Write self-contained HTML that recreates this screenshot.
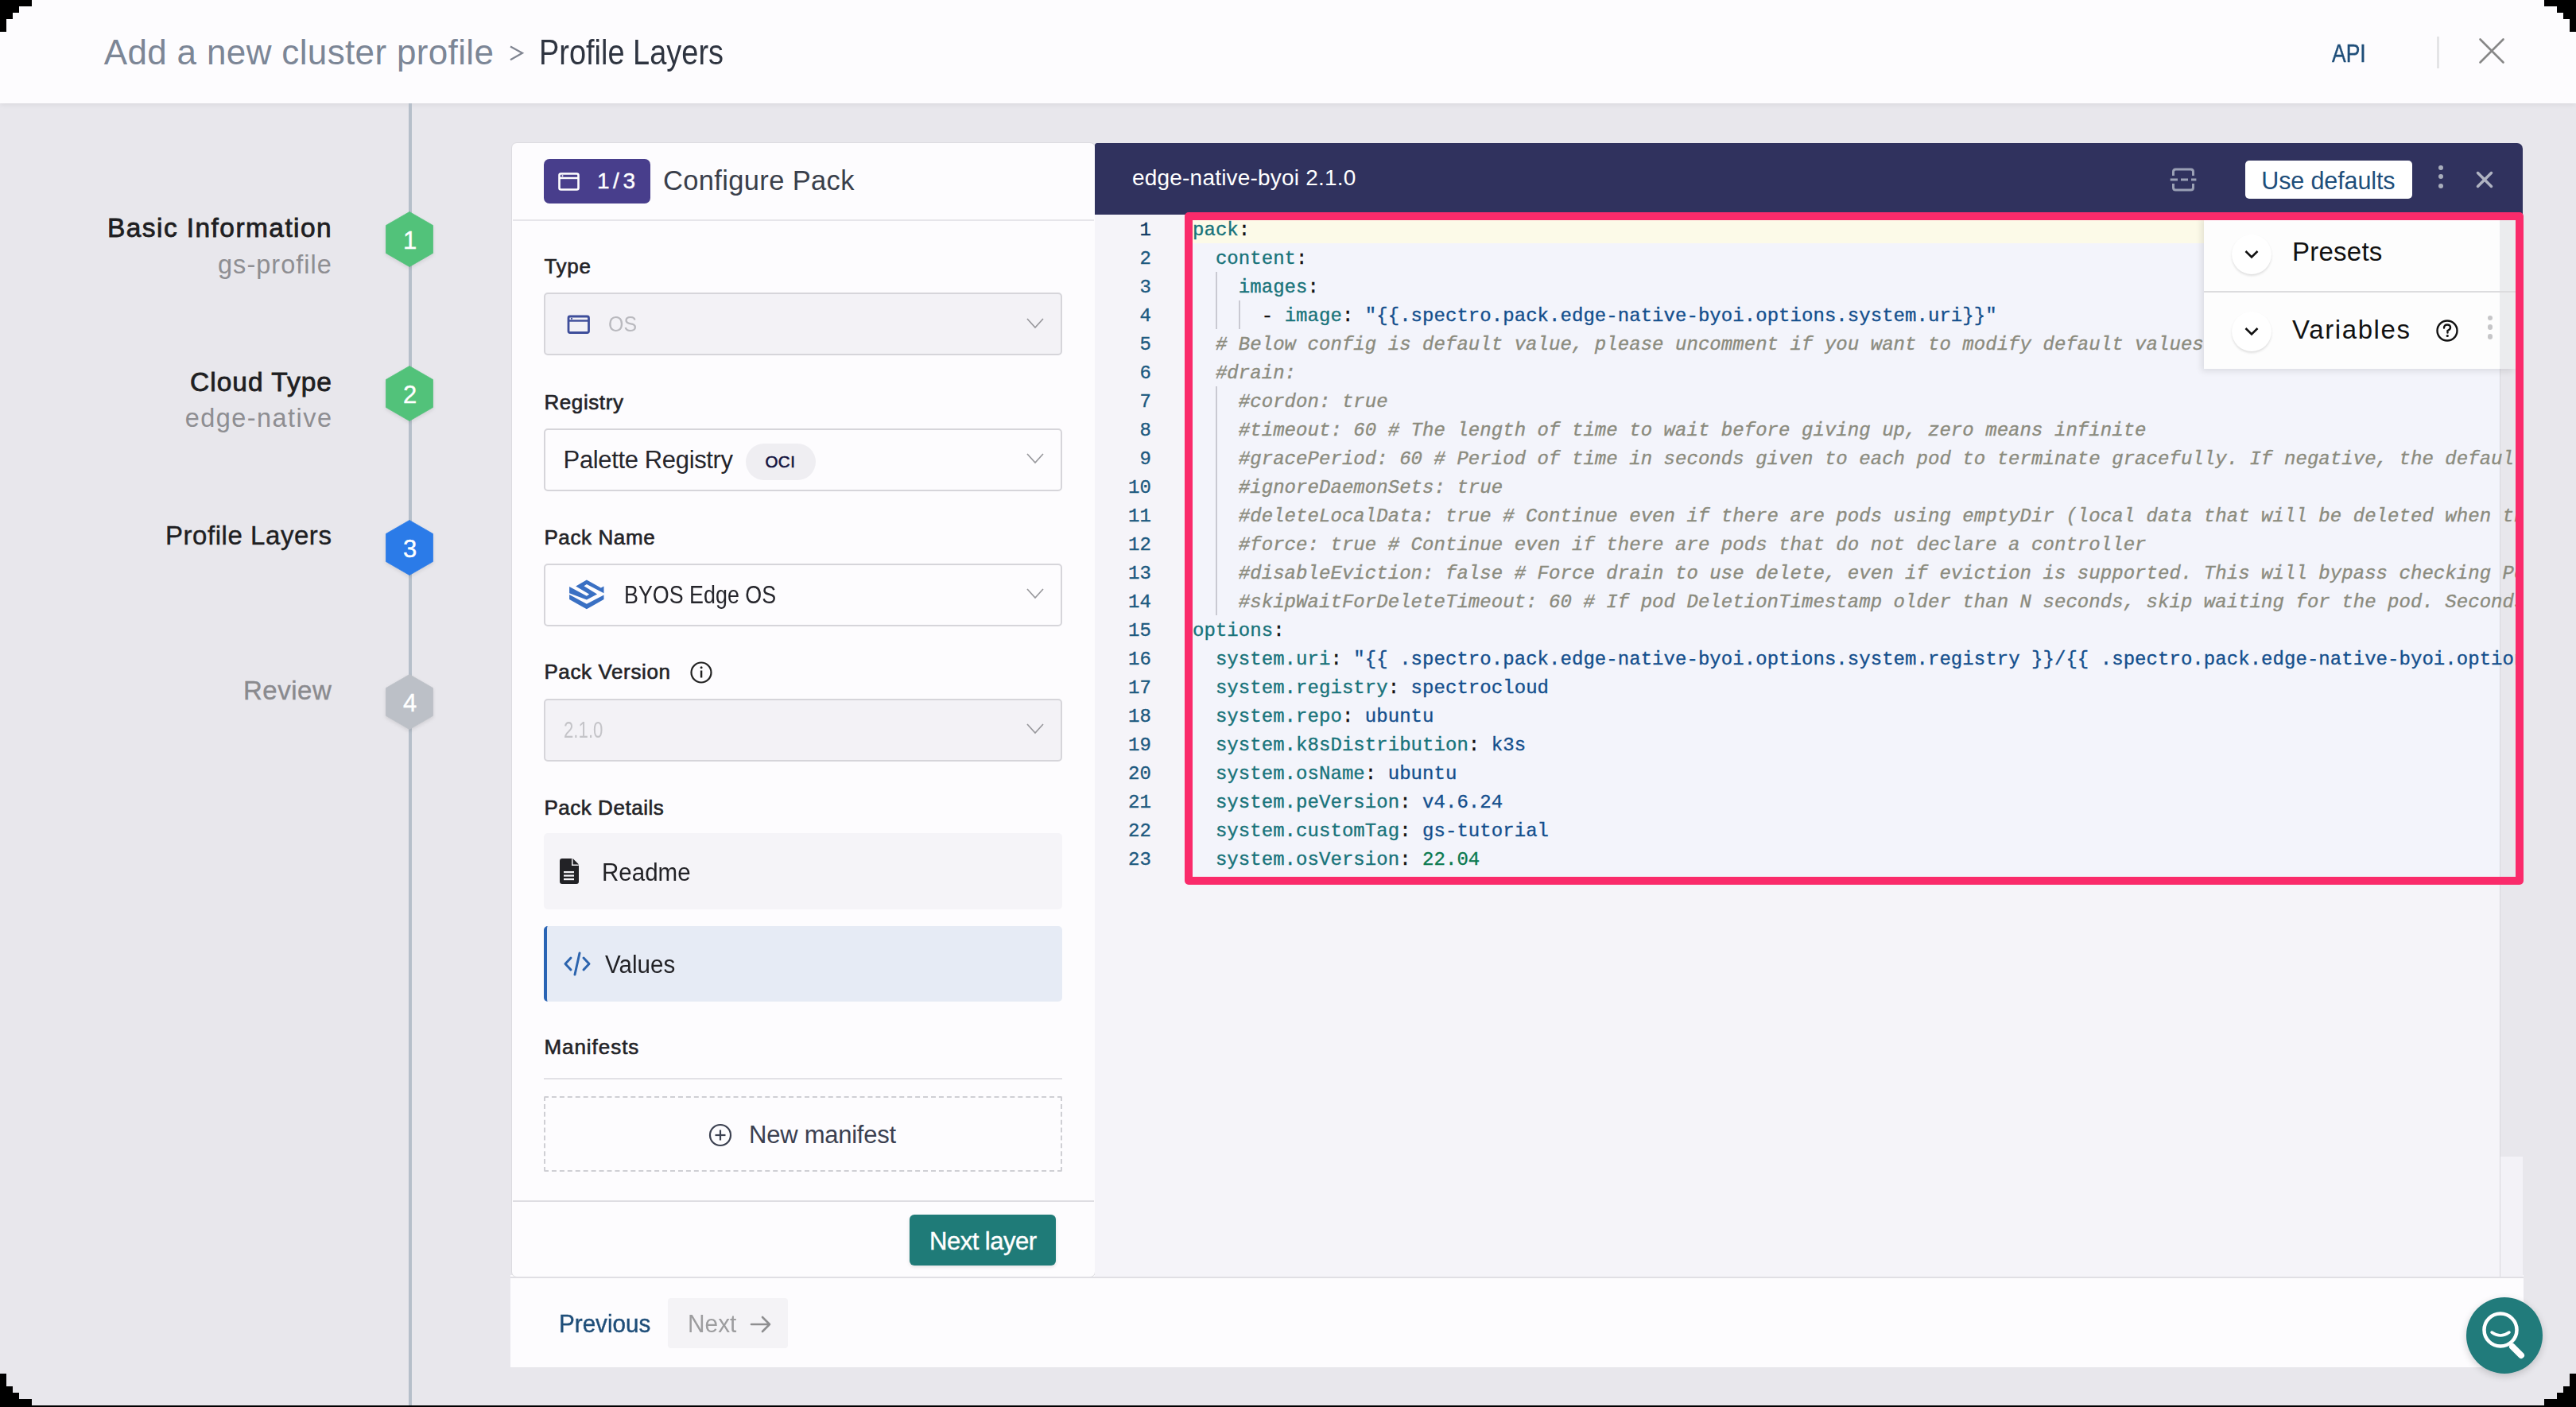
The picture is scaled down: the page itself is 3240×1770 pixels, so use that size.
<!DOCTYPE html><html><head><meta charset="utf-8"><title>Profile Layers</title><style>
*{margin:0;padding:0;box-sizing:border-box}
html,body{width:3240px;height:1770px;overflow:hidden;background:#e8e7ec;font-family:"Liberation Sans", sans-serif}
.a{position:absolute}
.t{position:absolute;white-space:pre;line-height:1}
.code{position:absolute;font-family:"Liberation Mono", monospace;white-space:pre;line-height:36px;-webkit-text-stroke:0.35px currentColor}
</style></head><body>
<div class="a" style="left:0;top:0;width:3240px;height:130px;background:#fdfcfe;box-shadow:0 2px 6px rgba(0,0,0,0.06)"></div>
<div class="t" style="left:130.7px;top:43.8px;font-size:44.0px;letter-spacing:0.35px;font-weight:normal;color:#7c8696;">Add a new cluster profile</div>
<svg class="a" style="left:638px;top:55px" width="24" height="24" viewBox="0 0 24 24"><polyline points="4,3.5 19,11.8 4,20.2" fill="none" stroke="#7f8490" stroke-width="2.2"/></svg>
<div class="t" style="left:678.0px;top:43.8px;font-size:44.0px;letter-spacing:0.00px;font-weight:normal;color:#2e3440;transform:scaleX(0.8625);transform-origin:0.0px 0;">Profile Layers</div>
<div class="t" style="left:2933.0px;top:52.2px;font-size:30.5px;letter-spacing:0.00px;font-weight:normal;color:#1f4e79;-webkit-text-stroke:0.4px #1f4e79;transform:scaleX(0.8679);transform-origin:0.0px 0;">API</div>
<div class="a" style="left:3065px;top:46px;width:3px;height:40px;background:#e4e4e6"></div>
<svg class="a" style="left:3116px;top:46px" width="36" height="36" viewBox="0 0 36 36"><path d="M3.5 3.5L32.5 32.5M32.5 3.5L3.5 32.5" stroke="#878787" stroke-width="2.6" stroke-linecap="round"/></svg>
<div class="a" style="left:514px;top:130px;width:4px;height:1640px;background:#b6bfca"></div>
<svg class="a" style="left:483px;top:264px;filter:drop-shadow(0 2px 2px rgba(0,0,0,0.10))" width="64" height="74" viewBox="-2 -2 64 74"><polygon points="30,0.5 59.5,17.5 59.5,52.5 30,69.5 0.5,52.5 0.5,17.5" fill="#52c27a" stroke="#52c27a" stroke-width="0.8" stroke-linejoin="round"/></svg>
<div class="t" style="left:507.0px;top:286.8px;font-size:31.0px;letter-spacing:0.00px;font-weight:normal;color:#fff;-webkit-text-stroke:0.4px #fff;text-align:center;">1</div>
<svg class="a" style="left:483px;top:458px;filter:drop-shadow(0 2px 2px rgba(0,0,0,0.10))" width="64" height="74" viewBox="-2 -2 64 74"><polygon points="30,0.5 59.5,17.5 59.5,52.5 30,69.5 0.5,52.5 0.5,17.5" fill="#52c27a" stroke="#52c27a" stroke-width="0.8" stroke-linejoin="round"/></svg>
<div class="t" style="left:507.0px;top:480.8px;font-size:31.0px;letter-spacing:0.00px;font-weight:normal;color:#fff;-webkit-text-stroke:0.4px #fff;text-align:center;">2</div>
<svg class="a" style="left:483px;top:652px;filter:drop-shadow(0 2px 2px rgba(0,0,0,0.10))" width="64" height="74" viewBox="-2 -2 64 74"><polygon points="30,0.5 59.5,17.5 59.5,52.5 30,69.5 0.5,52.5 0.5,17.5" fill="#2b7be8" stroke="#2b7be8" stroke-width="0.8" stroke-linejoin="round"/></svg>
<div class="t" style="left:507.0px;top:674.8px;font-size:31.0px;letter-spacing:0.00px;font-weight:normal;color:#fff;-webkit-text-stroke:0.4px #fff;text-align:center;">3</div>
<svg class="a" style="left:483px;top:846px;filter:drop-shadow(0 2px 2px rgba(0,0,0,0.10))" width="64" height="74" viewBox="-2 -2 64 74"><polygon points="30,0.5 59.5,17.5 59.5,52.5 30,69.5 0.5,52.5 0.5,17.5" fill="#bcc0c7" stroke="#bcc0c7" stroke-width="0.8" stroke-linejoin="round"/></svg>
<div class="t" style="left:507.0px;top:868.8px;font-size:31.0px;letter-spacing:0.00px;font-weight:normal;color:#fff;-webkit-text-stroke:0.4px #fff;text-align:center;">4</div>
<div class="t" style="left:135.0px;top:270.3px;font-size:33.5px;letter-spacing:1.43px;font-weight:normal;color:#1e1e22;-webkit-text-stroke:0.8px #1e1e22;">Basic Information</div>
<div class="t" style="left:274.0px;top:316.9px;font-size:32.5px;letter-spacing:1.03px;font-weight:normal;color:#8e8e92;">gs-profile</div>
<div class="t" style="left:239.0px;top:463.6px;font-size:33.5px;letter-spacing:1.01px;font-weight:normal;color:#1e1e22;-webkit-text-stroke:0.8px #1e1e22;">Cloud Type</div>
<div class="t" style="left:232.7px;top:510.0px;font-size:32.5px;letter-spacing:1.45px;font-weight:normal;color:#8e8e92;">edge-native</div>
<div class="t" style="left:208.0px;top:657.4px;font-size:33.0px;letter-spacing:0.55px;font-weight:normal;color:#1e1e22;-webkit-text-stroke:0.4px #1e1e22;">Profile Layers</div>
<div class="t" style="left:306.0px;top:852.1px;font-size:33.0px;letter-spacing:0.52px;font-weight:normal;color:#8a8a8e;-webkit-text-stroke:0.4px #8a8a8e;">Review</div>
<div class="a" style="left:642px;top:1604px;width:2532px;height:116px;background:#fdfcfe"></div>
<div class="a" style="left:643px;top:179px;width:735px;height:1428px;background:#fdfcfe;border:1.5px solid #dcdbe0;border-radius:7px"></div>
<div class="a" style="left:645px;top:276px;width:731px;height:2px;background:#e6e5ea"></div>
<div class="a" style="left:684px;top:200px;width:134px;height:56px;background:#483e8c;border-radius:7px"></div>
<svg class="a" style="left:702px;top:217px" width="28" height="24" viewBox="0 0 28 24"><rect x="1.5" y="1.5" width="24" height="20" rx="2" fill="none" stroke="#fff" stroke-width="2.6"/><line x1="1.5" y1="7" x2="25.5" y2="7" stroke="#fff" stroke-width="2.4"/><circle cx="5.5" cy="4.3" r="1" fill="#fff"/></svg>
<div class="t" style="left:751.0px;top:214.3px;font-size:28.0px;letter-spacing:4.55px;font-weight:normal;color:#ffffff;-webkit-text-stroke:0.4px #ffffff;">1/3</div>
<div class="t" style="left:834.0px;top:209.6px;font-size:34.5px;letter-spacing:0.35px;font-weight:normal;color:#3a3f4b;">Configure Pack</div>
<div class="t" style="left:684.4px;top:322.0px;font-size:26.0px;letter-spacing:0.73px;font-weight:normal;color:#232327;-webkit-text-stroke:0.6px #232327;">Type</div>
<div class="a" style="left:684px;top:368px;width:652px;height:79px;background:#f3f2f6;border:2px solid #d6d5da;border-radius:5px"></div>
<svg class="a" style="left:1290px;top:398.5px" width="24" height="16" viewBox="0 0 24 16"><polyline points="2,2 12,13 22,2" fill="none" stroke="#98989c" stroke-width="1.7"/></svg>
<svg class="a" style="left:713px;top:396px" width="30" height="25" viewBox="0 0 30 25"><rect x="2" y="2" width="25.5" height="20.5" rx="2" fill="none" stroke="#3e4e9a" stroke-width="2.8"/><line x1="2" y1="7.5" x2="27.5" y2="7.5" stroke="#3e4e9a" stroke-width="2.4"/><circle cx="6" cy="4.8" r="1.1" fill="#3e4e9a"/></svg>
<div class="t" style="left:765.0px;top:394.6px;font-size:27.0px;letter-spacing:0.00px;font-weight:normal;color:#b9b9be;transform:scaleX(0.9231);transform-origin:0.0px 0;">OS</div>
<div class="t" style="left:684.4px;top:492.8px;font-size:26.0px;letter-spacing:0.60px;font-weight:normal;color:#232327;-webkit-text-stroke:0.6px #232327;">Registry</div>
<div class="a" style="left:684px;top:538.8px;width:652px;height:79px;background:#fdfcfe;border:2px solid #d6d5da;border-radius:5px"></div>
<svg class="a" style="left:1290px;top:569.3px" width="24" height="16" viewBox="0 0 24 16"><polyline points="2,2 12,13 22,2" fill="none" stroke="#98989c" stroke-width="1.7"/></svg>
<div class="t" style="left:708.6px;top:562.5px;font-size:31.0px;letter-spacing:-0.36px;font-weight:normal;color:#25252b;">Palette Registry</div>
<div class="a" style="left:938px;top:558px;width:88px;height:46px;background:#efeef2;border-radius:23px"></div>
<div class="t" style="left:962.4px;top:570.6px;font-size:20.5px;letter-spacing:0.50px;font-weight:normal;color:#14143f;-webkit-text-stroke:0.6px #14143f;">OCI</div>
<div class="t" style="left:684.4px;top:662.6px;font-size:26.0px;letter-spacing:0.61px;font-weight:normal;color:#232327;-webkit-text-stroke:0.6px #232327;">Pack Name</div>
<div class="a" style="left:684px;top:708.6px;width:652px;height:79px;background:#fdfcfe;border:2px solid #d6d5da;border-radius:5px"></div>
<svg class="a" style="left:1290px;top:739.1px" width="24" height="16" viewBox="0 0 24 16"><polyline points="2,2 12,13 22,2" fill="none" stroke="#98989c" stroke-width="1.7"/></svg>
<svg class="a" style="left:712px;top:726px" width="52" height="44" viewBox="0 0 52 44"><polygon points="25.9,3.4 43.8,13.4 47.5,11.6 47.5,20.3 25.9,9.1 22.5,11.2 39.1,21.6 25.9,28.4 4.1,20.3 4.1,11.9 25.9,23.8 29.1,21.6 12.2,11.6" fill="#3a70c3"/><polygon points="4.1,21.9 25.9,33.8 47.5,22.5 47.5,28.1 25.9,40.3 4.1,28.1" fill="#3a70c3"/></svg>
<div class="t" style="left:784.9px;top:732.7px;font-size:30.5px;letter-spacing:0.00px;font-weight:normal;color:#25252b;transform:scaleX(0.8806);transform-origin:0.0px 0;">BYOS Edge OS</div>
<div class="t" style="left:684.4px;top:832.4px;font-size:26.0px;letter-spacing:0.62px;font-weight:normal;color:#232327;-webkit-text-stroke:0.6px #232327;">Pack Version</div>
<svg class="a" style="left:867px;top:831px" width="30" height="30" viewBox="0 0 30 30"><circle cx="15" cy="15" r="12.5" fill="none" stroke="#222" stroke-width="2.2"/><rect x="13.9" y="12.5" width="2.4" height="9" fill="#222"/><circle cx="15.1" cy="8.8" r="1.5" fill="#222"/></svg>
<div class="a" style="left:684px;top:878.6px;width:652px;height:79px;background:#f3f2f6;border:2px solid #d6d5da;border-radius:5px"></div>
<svg class="a" style="left:1290px;top:909.1px" width="24" height="16" viewBox="0 0 24 16"><polyline points="2,2 12,13 22,2" fill="none" stroke="#98989c" stroke-width="1.7"/></svg>
<div class="t" style="left:708.6px;top:903.5px;font-size:29.0px;letter-spacing:0.00px;font-weight:normal;color:#c4c4c8;transform:scaleX(0.7659);transform-origin:0.0px 0;">2.1.0</div>
<div class="t" style="left:684.4px;top:1002.8px;font-size:26.0px;letter-spacing:0.54px;font-weight:normal;color:#232327;-webkit-text-stroke:0.6px #232327;">Pack Details</div>
<div class="a" style="left:684px;top:1048px;width:652px;height:96px;background:#f5f4f8;border-radius:5px"></div>
<svg class="a" style="left:703px;top:1079px" width="26" height="34" viewBox="0 0 26 34"><path d="M3 1 H16 L25 10 V30 Q25 33 22 33 H4 Q1 33 1 30 V4 Q1 1 4 1 Z" fill="#222226"/><path d="M16 1 V10 H25" fill="#f5f4f8"/><path d="M17.5 1 V8.5 H25" fill="#222226"/><rect x="6" y="17" width="13" height="2.2" fill="#f5f4f8"/><rect x="6" y="21.5" width="13" height="2.2" fill="#f5f4f8"/><rect x="6" y="26" width="13" height="2.2" fill="#f5f4f8"/></svg>
<div class="t" style="left:757.0px;top:1082.4px;font-size:31.0px;letter-spacing:0.00px;font-weight:normal;color:#222226;transform:scaleX(0.9522);transform-origin:0.0px 0;">Readme</div>
<div class="a" style="left:684px;top:1164.5px;width:652px;height:95px;background:#e6ebf5;border-left:4px solid #2a64b4;border-radius:5px"></div>
<svg class="a" style="left:708px;top:1196px" width="36" height="33" viewBox="0 0 36 33"><polyline points="10,9 3,16.5 10,24" fill="none" stroke="#2c64ae" stroke-width="3" stroke-linecap="round" stroke-linejoin="round"/><polyline points="26,9 33,16.5 26,24" fill="none" stroke="#2c64ae" stroke-width="3" stroke-linecap="round" stroke-linejoin="round"/><line x1="21" y1="3" x2="15" y2="30" stroke="#2c64ae" stroke-width="3" stroke-linecap="round"/></svg>
<div class="t" style="left:760.6px;top:1198.1px;font-size:31.0px;letter-spacing:0.00px;font-weight:normal;color:#222226;transform:scaleX(0.9535);transform-origin:0.0px 0;">Values</div>
<div class="t" style="left:684.4px;top:1304.0px;font-size:26.0px;letter-spacing:0.96px;font-weight:normal;color:#232327;-webkit-text-stroke:0.6px #232327;">Manifests</div>
<div class="a" style="left:684px;top:1356px;width:652px;height:2px;background:#e2e1e6"></div>
<div class="a" style="left:684px;top:1378.5px;width:652px;height:95px;border:2px dashed #cfcfd4;border-radius:2px"></div>
<svg class="a" style="left:890px;top:1412px" width="32" height="32" viewBox="0 0 32 32"><circle cx="16" cy="16" r="13" fill="none" stroke="#3b4050" stroke-width="2.2"/><line x1="16" y1="9.5" x2="16" y2="22.5" stroke="#3b4050" stroke-width="2.2"/><line x1="9.5" y1="16" x2="22.5" y2="16" stroke="#3b4050" stroke-width="2.2"/></svg>
<div class="t" style="left:942.0px;top:1412.2px;font-size:31.0px;letter-spacing:-0.25px;font-weight:normal;color:#3b4050;">New manifest</div>
<div class="a" style="left:645px;top:1510px;width:731px;height:2px;background:#dedde2"></div>
<div class="a" style="left:1144px;top:1528px;width:184px;height:64px;background:#1f7b78;border-radius:6px;box-shadow:0 2px 4px rgba(0,0,0,0.1)"></div>
<div class="t" style="left:1169.0px;top:1546.3px;font-size:31.0px;letter-spacing:-0.50px;font-weight:normal;color:#ffffff;-webkit-text-stroke:0.4px #ffffff;">Next layer</div>
<div class="a" style="left:642px;top:1606px;width:2532px;height:2px;background:#e0dfe4"></div>
<div class="t" style="left:702.7px;top:1650.4px;font-size:31.0px;letter-spacing:0.00px;font-weight:normal;color:#1f4e79;-webkit-text-stroke:0.4px #1f4e79;transform:scaleX(0.9561);transform-origin:0.0px 0;">Previous</div>
<div class="a" style="left:840px;top:1633px;width:151px;height:63px;background:#f4f3f6;border-radius:4px"></div>
<div class="t" style="left:864.7px;top:1650.4px;font-size:31.0px;letter-spacing:0.00px;font-weight:normal;color:#9d9d9f;transform:scaleX(0.9623);transform-origin:0.0px 0;">Next</div>
<svg class="a" style="left:942px;top:1651px" width="30" height="30" viewBox="0 0 30 30"><path d="M3 15H26M17 6L26 15L17 24" fill="none" stroke="#8e8e90" stroke-width="2.6" stroke-linecap="round" stroke-linejoin="round"/></svg>
<div class="a" style="left:1377px;top:180px;width:1796px;height:1426px;background:#f5f4f9;border-radius:0 7px 7px 0"></div>
<div class="a" style="left:1377px;top:180px;width:1796px;height:90px;background:#30325e;border-radius:3px 7px 0 0"></div>
<div class="t" style="left:1424px;top:210.3px;font-size:28px;color:#fff;letter-spacing:0.2px">edge-native-byoi 2.1.0</div>
<svg class="a" style="left:2727px;top:210px" width="38" height="32" viewBox="0 0 38 32"><path d="M6.5 11V6Q6.5 3 9.5 3H28.5Q31.5 3 31.5 6V11M6.5 21V26Q6.5 29 9.5 29H28.5Q31.5 29 31.5 26V21" fill="none" stroke="#9aa0b5" stroke-width="3"/><path d="M2.7 16H12M16 16H25M29 16H35.4" stroke="#9aa0b5" stroke-width="3"/></svg>
<div class="a" style="left:2824px;top:202px;width:210px;height:48px;background:#fff;border-radius:5px"></div>
<div class="t" style="left:2844.3px;top:212.1px;font-size:30.5px;letter-spacing:-0.12px;font-weight:normal;color:#1e4e7a;">Use defaults</div>
<div class="a" style="left:3066.7px;top:207.5px;width:6.6px;height:6.6px;border-radius:50%;background:#a8adbb"></div>
<div class="a" style="left:3066.7px;top:218.89999999999998px;width:6.6px;height:6.6px;border-radius:50%;background:#a8adbb"></div>
<div class="a" style="left:3066.7px;top:230.6px;width:6.6px;height:6.6px;border-radius:50%;background:#a8adbb"></div>
<svg class="a" style="left:3113px;top:214px" width="24" height="24" viewBox="0 0 24 24"><path d="M3.5 3.5L20.5 20.5M20.5 3.5L3.5 20.5" stroke="#b0b4c2" stroke-width="3.5" stroke-linecap="round"/></svg>
<div class="a" style="left:3144px;top:277px;width:29px;height:1178px;background:#e8e7ec;border-left:1px solid #d8d8dd"></div>
<div class="a" style="left:3144px;top:1455px;width:29px;height:151px;background:#f3f2f7;border-left:1px solid #d8d8dd"></div>
<div class="a" style="left:1500px;top:277px;width:1644px;height:825px;background:#f3f4fb"></div>
<div class="a" style="left:1500px;top:270px;width:1290px;height:36px;background:#fcfae8"></div>
<div class="a" style="left:1529px;top:342px;width:2px;height:72px;background:#c9c9d2"></div>
<div class="a" style="left:1558px;top:378px;width:2px;height:36px;background:#c9c9d2"></div>
<div class="a" style="left:1529px;top:486px;width:2px;height:288px;background:#c9c9d2"></div>
<div class="a" style="left:1500px;top:270px;width:1664px;height:840px;overflow:hidden">
<div class="code" style="left:0;top:2.1px;font-size:24px;letter-spacing:0.05px"><span style="color:#18737a;">pack</span><span style="color:#111;">:</span></div>
<div class="code" style="left:0;top:38.1px;font-size:24px;letter-spacing:0.05px"><span style="color:#111;">  </span><span style="color:#18737a;">content</span><span style="color:#111;">:</span></div>
<div class="code" style="left:0;top:74.1px;font-size:24px;letter-spacing:0.05px"><span style="color:#111;">    </span><span style="color:#18737a;">images</span><span style="color:#111;">:</span></div>
<div class="code" style="left:0;top:110.1px;font-size:24px;letter-spacing:0.05px"><span style="color:#111;">      </span><span style="color:#111;">- </span><span style="color:#18737a;">image</span><span style="color:#111;">: </span><span style="color:#134f8d;">&quot;{{.spectro.pack.edge-native-byoi.options.system.uri}}&quot;</span></div>
<div class="code" style="left:0;top:146.1px;font-size:24px;letter-spacing:0.05px"><span style="color:#111;">  </span><span style="color:#8b8b7e;font-style:italic;"># Below config is default value, please uncomment if you want to modify default values</span></div>
<div class="code" style="left:0;top:182.1px;font-size:24px;letter-spacing:0.05px"><span style="color:#111;">  </span><span style="color:#8b8b7e;font-style:italic;">#drain:</span></div>
<div class="code" style="left:0;top:218.1px;font-size:24px;letter-spacing:0.05px"><span style="color:#111;">    </span><span style="color:#8b8b7e;font-style:italic;">#cordon: true</span></div>
<div class="code" style="left:0;top:254.1px;font-size:24px;letter-spacing:0.05px"><span style="color:#111;">    </span><span style="color:#8b8b7e;font-style:italic;">#timeout: 60 # The length of time to wait before giving up, zero means infinite</span></div>
<div class="code" style="left:0;top:290.1px;font-size:24px;letter-spacing:0.05px"><span style="color:#111;">    </span><span style="color:#8b8b7e;font-style:italic;">#gracePeriod: 60 # Period of time in seconds given to each pod to terminate gracefully. If negative, the default value specified in the pod will be used</span></div>
<div class="code" style="left:0;top:326.1px;font-size:24px;letter-spacing:0.05px"><span style="color:#111;">    </span><span style="color:#8b8b7e;font-style:italic;">#ignoreDaemonSets: true</span></div>
<div class="code" style="left:0;top:362.1px;font-size:24px;letter-spacing:0.05px"><span style="color:#111;">    </span><span style="color:#8b8b7e;font-style:italic;">#deleteLocalData: true # Continue even if there are pods using emptyDir (local data that will be deleted when the node is drained)</span></div>
<div class="code" style="left:0;top:398.1px;font-size:24px;letter-spacing:0.05px"><span style="color:#111;">    </span><span style="color:#8b8b7e;font-style:italic;">#force: true # Continue even if there are pods that do not declare a controller</span></div>
<div class="code" style="left:0;top:434.1px;font-size:24px;letter-spacing:0.05px"><span style="color:#111;">    </span><span style="color:#8b8b7e;font-style:italic;">#disableEviction: false # Force drain to use delete, even if eviction is supported. This will bypass checking PodDisruptionBudgets, use with caution</span></div>
<div class="code" style="left:0;top:470.1px;font-size:24px;letter-spacing:0.05px"><span style="color:#111;">    </span><span style="color:#8b8b7e;font-style:italic;">#skipWaitForDeleteTimeout: 60 # If pod DeletionTimestamp older than N seconds, skip waiting for the pod. Seconds must be greater than 0 to skip.</span></div>
<div class="code" style="left:0;top:506.1px;font-size:24px;letter-spacing:0.05px"><span style="color:#18737a;">options</span><span style="color:#111;">:</span></div>
<div class="code" style="left:0;top:542.1px;font-size:24px;letter-spacing:0.05px"><span style="color:#111;">  </span><span style="color:#18737a;">system.uri</span><span style="color:#111;">: </span><span style="color:#134f8d;">&quot;{{ .spectro.pack.edge-native-byoi.options.system.registry }}/{{ .spectro.pack.edge-native-byoi.options.system.repo }}:{{ .spectro.pack.edge-native-byoi.options.system.k8sDistribution }}&quot;</span></div>
<div class="code" style="left:0;top:578.1px;font-size:24px;letter-spacing:0.05px"><span style="color:#111;">  </span><span style="color:#18737a;">system.registry</span><span style="color:#111;">: </span><span style="color:#134f8d;">spectrocloud</span></div>
<div class="code" style="left:0;top:614.1px;font-size:24px;letter-spacing:0.05px"><span style="color:#111;">  </span><span style="color:#18737a;">system.repo</span><span style="color:#111;">: </span><span style="color:#134f8d;">ubuntu</span></div>
<div class="code" style="left:0;top:650.1px;font-size:24px;letter-spacing:0.05px"><span style="color:#111;">  </span><span style="color:#18737a;">system.k8sDistribution</span><span style="color:#111;">: </span><span style="color:#134f8d;">k3s</span></div>
<div class="code" style="left:0;top:686.1px;font-size:24px;letter-spacing:0.05px"><span style="color:#111;">  </span><span style="color:#18737a;">system.osName</span><span style="color:#111;">: </span><span style="color:#134f8d;">ubuntu</span></div>
<div class="code" style="left:0;top:722.1px;font-size:24px;letter-spacing:0.05px"><span style="color:#111;">  </span><span style="color:#18737a;">system.peVersion</span><span style="color:#111;">: </span><span style="color:#134f8d;">v4.6.24</span></div>
<div class="code" style="left:0;top:758.1px;font-size:24px;letter-spacing:0.05px"><span style="color:#111;">  </span><span style="color:#18737a;">system.customTag</span><span style="color:#111;">: </span><span style="color:#134f8d;">gs-tutorial</span></div>
<div class="code" style="left:0;top:794.1px;font-size:24px;letter-spacing:0.05px"><span style="color:#111;">  </span><span style="color:#18737a;">system.osVersion</span><span style="color:#111;">: </span><span style="color:#0b7a50;">22.04</span></div>
</div>
<div class="code" style="left:1380px;width:68px;text-align:right;top:272.1px;font-size:24px;letter-spacing:0.05px;color:#0f3a64">1</div>
<div class="code" style="left:1380px;width:68px;text-align:right;top:308.1px;font-size:24px;letter-spacing:0.05px;color:#1d5a80">2</div>
<div class="code" style="left:1380px;width:68px;text-align:right;top:344.1px;font-size:24px;letter-spacing:0.05px;color:#1d5a80">3</div>
<div class="code" style="left:1380px;width:68px;text-align:right;top:380.1px;font-size:24px;letter-spacing:0.05px;color:#1d5a80">4</div>
<div class="code" style="left:1380px;width:68px;text-align:right;top:416.1px;font-size:24px;letter-spacing:0.05px;color:#1d5a80">5</div>
<div class="code" style="left:1380px;width:68px;text-align:right;top:452.1px;font-size:24px;letter-spacing:0.05px;color:#1d5a80">6</div>
<div class="code" style="left:1380px;width:68px;text-align:right;top:488.1px;font-size:24px;letter-spacing:0.05px;color:#1d5a80">7</div>
<div class="code" style="left:1380px;width:68px;text-align:right;top:524.1px;font-size:24px;letter-spacing:0.05px;color:#1d5a80">8</div>
<div class="code" style="left:1380px;width:68px;text-align:right;top:560.1px;font-size:24px;letter-spacing:0.05px;color:#1d5a80">9</div>
<div class="code" style="left:1380px;width:68px;text-align:right;top:596.1px;font-size:24px;letter-spacing:0.05px;color:#1d5a80">10</div>
<div class="code" style="left:1380px;width:68px;text-align:right;top:632.1px;font-size:24px;letter-spacing:0.05px;color:#1d5a80">11</div>
<div class="code" style="left:1380px;width:68px;text-align:right;top:668.1px;font-size:24px;letter-spacing:0.05px;color:#1d5a80">12</div>
<div class="code" style="left:1380px;width:68px;text-align:right;top:704.1px;font-size:24px;letter-spacing:0.05px;color:#1d5a80">13</div>
<div class="code" style="left:1380px;width:68px;text-align:right;top:740.1px;font-size:24px;letter-spacing:0.05px;color:#1d5a80">14</div>
<div class="code" style="left:1380px;width:68px;text-align:right;top:776.1px;font-size:24px;letter-spacing:0.05px;color:#1d5a80">15</div>
<div class="code" style="left:1380px;width:68px;text-align:right;top:812.1px;font-size:24px;letter-spacing:0.05px;color:#1d5a80">16</div>
<div class="code" style="left:1380px;width:68px;text-align:right;top:848.1px;font-size:24px;letter-spacing:0.05px;color:#1d5a80">17</div>
<div class="code" style="left:1380px;width:68px;text-align:right;top:884.1px;font-size:24px;letter-spacing:0.05px;color:#1d5a80">18</div>
<div class="code" style="left:1380px;width:68px;text-align:right;top:920.1px;font-size:24px;letter-spacing:0.05px;color:#1d5a80">19</div>
<div class="code" style="left:1380px;width:68px;text-align:right;top:956.1px;font-size:24px;letter-spacing:0.05px;color:#1d5a80">20</div>
<div class="code" style="left:1380px;width:68px;text-align:right;top:992.1px;font-size:24px;letter-spacing:0.05px;color:#1d5a80">21</div>
<div class="code" style="left:1380px;width:68px;text-align:right;top:1028.1px;font-size:24px;letter-spacing:0.05px;color:#1d5a80">22</div>
<div class="code" style="left:1380px;width:68px;text-align:right;top:1064.1px;font-size:24px;letter-spacing:0.05px;color:#1d5a80">23</div>
<div class="a" style="left:2772px;top:272px;width:392px;height:192px;background:#fdfdfd;box-shadow:-3px 3px 8px rgba(0,0,0,0.10)"></div>
<div class="a" style="left:3144px;top:272px;width:20px;height:192px;background:#ebecee"></div>
<div class="a" style="left:2772px;top:366px;width:392px;height:2px;background:#dcdcde"></div>
<div class="a" style="left:2807px;top:294.8px;width:50px;height:50px;border-radius:50%;background:#fff;box-shadow:0 2px 3px rgba(0,0,0,0.12)"></div>
<svg class="a" style="left:2822px;top:312.8px" width="20" height="14" viewBox="0 0 20 14"><polyline points="2.5,3 10,10.5 17.5,3" fill="none" stroke="#111" stroke-width="2.6"/></svg>
<div class="a" style="left:2807px;top:391.8px;width:50px;height:50px;border-radius:50%;background:#fff;box-shadow:0 2px 3px rgba(0,0,0,0.12)"></div>
<svg class="a" style="left:2822px;top:409.8px" width="20" height="14" viewBox="0 0 20 14"><polyline points="2.5,3 10,10.5 17.5,3" fill="none" stroke="#111" stroke-width="2.6"/></svg>
<div class="t" style="left:2883.0px;top:299.7px;font-size:33.0px;letter-spacing:0.25px;font-weight:normal;color:#111111;">Presets</div>
<div class="t" style="left:2883.0px;top:397.7px;font-size:33.0px;letter-spacing:1.61px;font-weight:normal;color:#111111;">Variables</div>
<svg class="a" style="left:3062px;top:400px" width="32" height="32" viewBox="0 0 32 32"><circle cx="16" cy="16" r="12.5" fill="none" stroke="#111" stroke-width="2.4"/><path d="M12 12.5Q12 8.5 16 8.5Q20 8.5 20 12Q20 14.5 16.5 16V18.5" fill="none" stroke="#111" stroke-width="2.4" stroke-linecap="round"/><circle cx="16.3" cy="22.5" r="1.6" fill="#111"/></svg>
<div class="a" style="left:3128.7px;top:396.7px;width:6.6px;height:6.6px;border-radius:50%;background:#c6c6c8"></div>
<div class="a" style="left:3128.7px;top:408.4px;width:6.6px;height:6.6px;border-radius:50%;background:#c6c6c8"></div>
<div class="a" style="left:3128.7px;top:420.1px;width:6.6px;height:6.6px;border-radius:50%;background:#c6c6c8"></div>
<div class="a" style="left:1490px;top:267px;width:1684px;height:846px;border:10px solid #fa2b6b;border-radius:5px"></div>
<div class="a" style="left:3102px;top:1632px;width:96px;height:96px;border-radius:50%;background:#217b7b;box-shadow:0 3px 10px rgba(0,0,0,0.18)"></div>
<svg class="a" style="left:3102px;top:1632px" width="96" height="96" viewBox="0 0 96 96"><circle cx="43" cy="41" r="20.5" fill="none" stroke="#fff" stroke-width="4.5"/><path d="M32 44Q43 52 54 44" fill="none" stroke="#fff" stroke-width="3.5" stroke-linecap="round"/><line x1="58" y1="62" x2="69" y2="73" stroke="#fff" stroke-width="8" stroke-linecap="round"/></svg>
<div class="a" style="left:0px;top:0px;width:40px;height:8px;background:#000"></div>
<div class="a" style="left:0px;top:8px;width:24px;height:8px;background:#000"></div>
<div class="a" style="left:0px;top:16px;width:16px;height:8px;background:#000"></div>
<div class="a" style="left:0px;top:24px;width:8px;height:16px;background:#000"></div>
<div class="a" style="left:3200px;top:0px;width:40px;height:8px;background:#000"></div>
<div class="a" style="left:3216px;top:8px;width:24px;height:8px;background:#000"></div>
<div class="a" style="left:3224px;top:16px;width:16px;height:8px;background:#000"></div>
<div class="a" style="left:3232px;top:24px;width:8px;height:16px;background:#000"></div>
<div class="a" style="left:0px;top:1728px;width:8px;height:16px;background:#000"></div>
<div class="a" style="left:0px;top:1744px;width:16px;height:8px;background:#000"></div>
<div class="a" style="left:0px;top:1752px;width:24px;height:8px;background:#000"></div>
<div class="a" style="left:0px;top:1760px;width:40px;height:10px;background:#000"></div>
<div class="a" style="left:3232px;top:1728px;width:8px;height:16px;background:#000"></div>
<div class="a" style="left:3224px;top:1744px;width:16px;height:8px;background:#000"></div>
<div class="a" style="left:3216px;top:1752px;width:24px;height:8px;background:#000"></div>
<div class="a" style="left:3200px;top:1760px;width:40px;height:10px;background:#000"></div>
<div class="a" style="left:0px;top:1767.5px;width:3240px;height:2.5px;background:#000"></div>
</body></html>
